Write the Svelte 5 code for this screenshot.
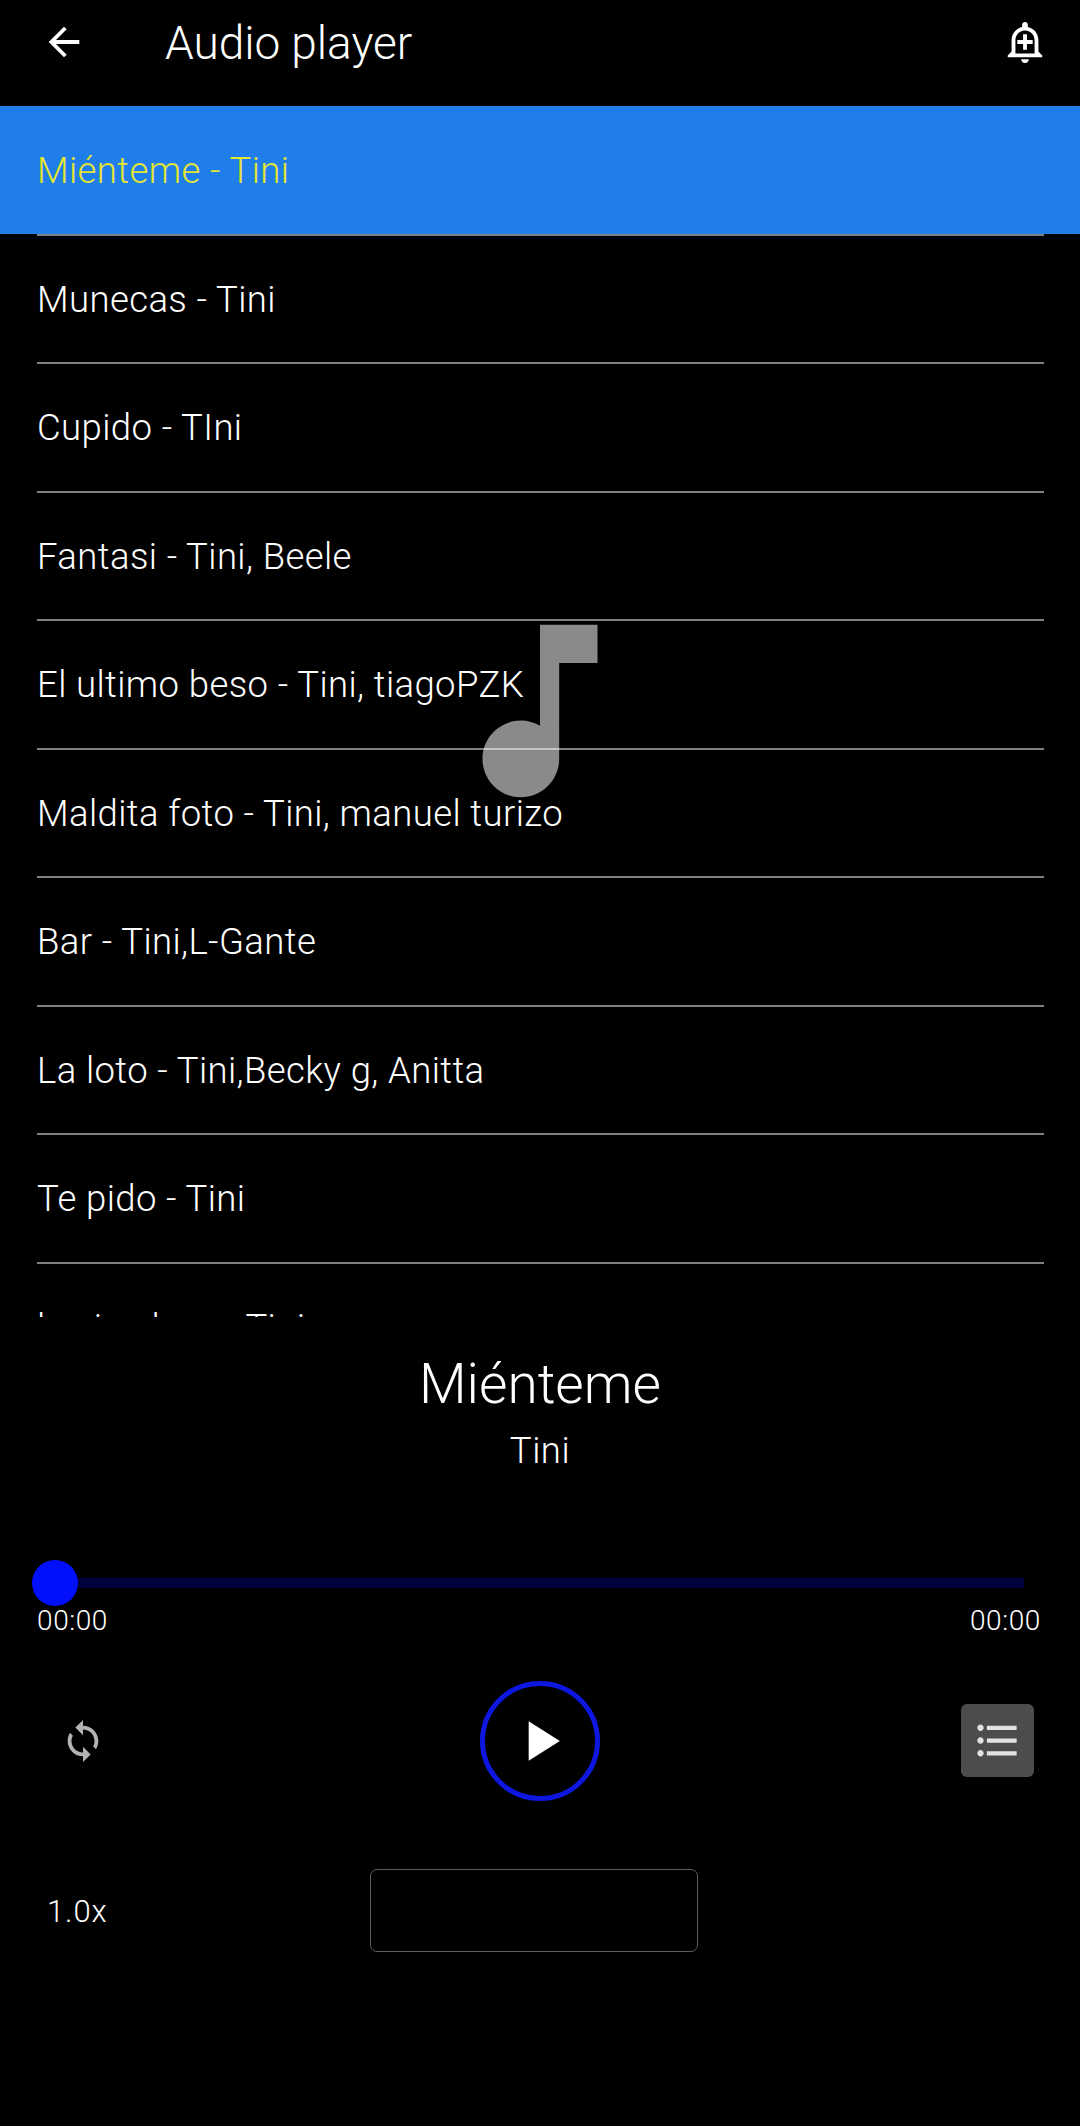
<script>
  const songs = [
    'Miénteme - Tini',
    'Munecas - Tini',
    'Cupido - TIni',
    'Fantasi - Tini, Beele',
    'El ultimo beso - Tini, tiagoPZK',
    'Maldita foto - Tini, manuel turizo',
    'Bar - Tini,L-Gante',
    'La loto - Tini,Becky g, Anitta',
    'Te pido - Tini',
    'la sine leva - Tini'
  ];
  let current = $state(0);
</script>

<main>
  <header>
    <button class="icon" aria-label="Back">
      <svg width="46" height="46" viewBox="0 0 24 24"><path d="M20 11H7.83l5.59-5.59L12 4l-8 8 8 8 1.41-1.41L7.83 13H20v-2z" /></svg>
    </button>
    <h1>Audio player</h1>
    <button class="icon" aria-label="Add alert">
      <svg width="46" height="46" viewBox="0 0 24 24"><path d="M10.01 21.01c0 1.1.89 1.99 1.99 1.99s1.99-.89 1.99-1.99h-3.98zM12 6c2.76 0 5 2.24 5 5v7H7v-7c0-2.76 2.24-5 5-5zm0-4.5c-.83 0-1.5.67-1.5 1.5v1.17C7.36 4.85 5 7.65 5 11v6l-2 2v1h18v-1l-2-2v-6c0-3.35-2.36-6.15-5.5-6.83V3c0-.83-.67-1.5-1.5-1.5zM11 8v3H8v2h3v3h2v-3h3v-2h-3V8h-2z" /></svg>
    </button>
  </header>

  <section class="playlist">
    <svg class="note" width="230" height="230" viewBox="0 0 24 24"><path d="M12 3v10.55c-.59-.34-1.27-.55-2-.55-2.21 0-4 1.79-4 4s1.79 4 4 4 4-1.79 4-4V7h4V3h-6z" /></svg>
    <ul>
      {#each songs as song, i}
        <li class:active={i === current}>
          <button class="song" onclick={() => (current = i)}>{song}</button>
        </li>
      {/each}
    </ul>
  </section>

  <section class="player">
    <h2>Miénteme</h2>
    <p class="artist">Tini</p>
    <div class="slider"><span class="thumb"></span></div>
    <div class="times"><span>00:00</span><span>00:00</span></div>
    <div class="controls">
      <button class="tool" aria-label="Repeat">
        <svg width="46" height="46" viewBox="0 0 24 24"><path d="M12 4V1L8 5l4 4V6c3.31 0 6 2.69 6 6 0 1.01-.25 1.97-.7 2.8l1.46 1.46C19.54 15.03 20 13.57 20 12c0-4.42-3.58-8-8-8zm0 14c-3.31 0-6-2.69-6-6 0-1.01.25-1.97.7-2.8L5.24 7.74C4.46 8.97 4 10.43 4 12c0 4.42 3.58 8 8 8v3l4-4-4-4v3z" /></svg>
      </button>
      <button class="play" aria-label="Play">
        <svg width="68" height="68" viewBox="0 0 24 24"><path d="M8 5v14l11-7z" /></svg>
      </button>
      <button class="tool selected" aria-label="Playlist">
        <svg width="51" height="51" viewBox="0 0 24 24"><path d="M4 10.5c-.83 0-1.5.67-1.5 1.5s.67 1.5 1.5 1.5 1.5-.67 1.5-1.5-.67-1.5-1.5-1.5zm0-6c-.83 0-1.5.67-1.5 1.5S3.170 7.500 4 7.500 5.500 6.830 5.500 6 4.830 4.500 4 4.500zm0 12c-.83 0-1.500.68-1.500 1.500s.68 1.500 1.500 1.500 1.500-.68 1.500-1.500-.67-1.500-1.500-1.500zM7 19h14v-2H7v2zm0-6h14v-2H7v2zm0-8v2h14V5H7z" /></svg>
      </button>
    </div>
    <div class="bottom">
      <span class="speed">1.0x</span>
      <div class="field"></div>
    </div>
  </section>
</main>

<style>
  :global(body) { background: #000; }
  main {
    width: 1080px;
    height: 2126px;
    overflow: hidden;
    display: flex;
    flex-direction: column;
    background: #000;
    color: #fff;
    font-family: Roboto, sans-serif;
    font-weight: 300;
  }
  button {
    border: 0;
    padding: 0;
    margin: 0;
    background: none;
    color: inherit;
    font: inherit;
  }
  svg { display: block; fill: currentColor; }
  h1, h2, p, ul { margin: 0; padding: 0; font-weight: 300; }
  header {
    height: 106px;
    flex: none;
    box-sizing: border-box;
    display: flex;
    align-items: flex-start;
    padding: 19px 32px 0 41px;
  }
  h1 {
    flex: 1;
    margin: 1px 0 0 78px;
    font-size: 46px;
    line-height: 46px;
    letter-spacing: -0.05px;
  }
  .playlist {
    position: relative;
    height: 1211px;
    flex: none;
    overflow: hidden;
  }
  .note { position: absolute; left: 425px; top: 490px; color: #8a8a8a; }
  ul { position: relative; list-style: none; }
  li { height: 128.5px; padding: 0 36.5px; }
  .active { height: 128px; margin-bottom: 0.5px; background: #207eeb; color: #e4e532; }
  .song {
    display: block;
    box-sizing: border-box;
    width: 100%;
    height: 129.9px;
    padding: 1.6px 0 0 0.5px;
    border-bottom: 2px solid rgba(255, 255, 255, 0.5);
    text-align: left;
    font-size: 36.5px;
    letter-spacing: 0.4px;
  }
  .player { display: flex; flex-direction: column; }
  h2 { margin-top: 35px; text-align: center; font-size: 55px; line-height: 64px; }
  .artist { margin-top: 13px; text-align: center; font-size: 36.5px; line-height: 44px; letter-spacing: 0.5px; }
  .slider {
    margin: 105px 56px 0 55px;
    height: 10px;
    background: #00003c;
    display: flex;
    align-items: center;
  }
  .thumb { flex: none; width: 46px; height: 46px; margin-left: -23px; border-radius: 50%; background: #0010ff; }
  .times {
    display: flex;
    justify-content: space-between;
    margin-top: 15px;
    padding: 0 39px 0 37px;
    font-size: 28px;
    line-height: 36px;
    letter-spacing: 0.6px;
  }
  .controls {
    display: flex;
    align-items: center;
    justify-content: space-between;
    margin-top: 41.5px;
    padding: 0 46px;
  }
  .tool {
    width: 73px;
    height: 73px;
    border-radius: 6px;
    display: grid;
    place-items: center;
    color: #b3b3b3;
  }
  .selected { background: #4c4c4c; color: #e2e2e2; }
  .play {
    box-sizing: border-box;
    width: 120px;
    height: 120px;
    border: 5px solid #0e17e0;
    border-radius: 50%;
    display: grid;
    place-items: center;
  }
  .bottom { display: flex; align-items: center; margin-top: 68.5px; padding-left: 47px; }
  .speed { width: 323px; padding-top: 1px; font-size: 31px; letter-spacing: 0.9px; }
  .field { box-sizing: border-box; width: 328px; height: 83px; border: 1px solid #5c5c5c; border-radius: 7px; }
</style>
